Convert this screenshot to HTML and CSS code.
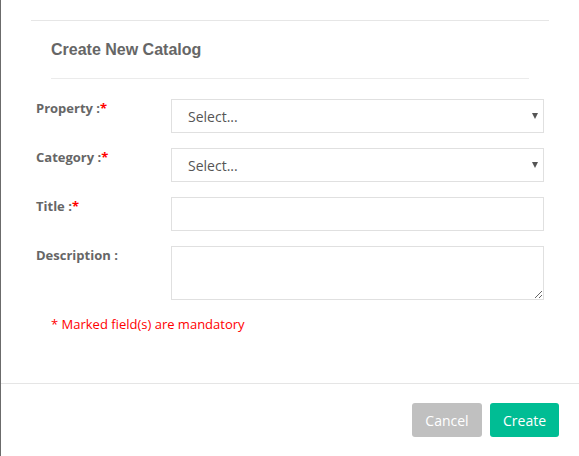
FILE: index.html
```html
<!DOCTYPE html>
<html>
<head>
<meta charset="utf-8">
<link rel="stylesheet" href="styles.css">
</head>
<body>
<div class="modal">
  <div class="top-rule"></div>
  <div class="header">
    <h2 class="title">Create New Catalog</h2>
  </div>
  <form class="form">
    <div class="row">
      <label class="label">Property :<span class="req">*</span></label>
      <div class="select-wrap">
        <select class="control select"><option>Select...</option></select>
        <span class="arrow"></span>
      </div>
    </div>
    <div class="row">
      <label class="label">Category :<span class="req">*</span></label>
      <div class="select-wrap">
        <select class="control select"><option>Select...</option></select>
        <span class="arrow"></span>
      </div>
    </div>
    <div class="row">
      <label class="label">Title :<span class="req">*</span></label>
      <input class="control input" type="text">
    </div>
    <div class="row">
      <label class="label">Description :</label>
      <textarea class="control textarea"></textarea>
    </div>
    <p class="note">* Marked field(s) are mandatory</p>
  </form>
  <div class="footer">
    <button class="btn btn-cancel" type="button">Cancel</button>
    <button class="btn btn-create" type="button">Create</button>
  </div>
</div>
</body>
</html>
```
FILE: styles.css
```css
html, body {
  margin: 0;
  padding: 0;
  background: #ffffff;
}
.modal {
  width: 578px;
  height: 456px;
  border-left: 1px solid #6b6b6b;
  display: flex;
  flex-direction: column;
  font-family: "Open Sans", sans-serif;
}
.top-rule {
  margin: 20px 30px 0 30px;
  border-top: 1px solid #e6e6e6;
}
.header {
  margin: 0 50px;
  border-bottom: 1px solid #ebebeb;
  padding: 19px 0 18px 0;
}
.title {
  margin: 0;
  font-family: "Liberation Sans", Arial, sans-serif;
  font-weight: bold;
  font-size: 16px;
  line-height: 20px;
  color: #666666;
}
.form {
  padding: 20px 35px 0 35px;
  margin: 0;
}
.row {
  display: flex;
  align-items: flex-start;
  margin-bottom: 15px;
}
.label {
  width: 135px;
  flex: none;
  font-size: 13px;
  font-weight: bold;
  color: #666666;
  line-height: 16px;
  padding-top: 1px;
}
.req {
  color: #ff0000;
  font-size: 13px;
}
.select-wrap {
  position: relative;
  flex: 1;
  display: flex;
}
.control {
  box-sizing: border-box;
  flex: 1;
  height: 34px;
  border: 1px solid #e0e0e0;
  border-radius: 0;
  background: #ffffff;
  font-family: "Open Sans", sans-serif;
  font-size: 14px;
  color: #555555;
  margin: 0;
  outline: none;
}
.select {
  appearance: none;
  -webkit-appearance: none;
  padding: 0 0 0 16px;
}
.arrow {
  position: absolute;
  right: 6px;
  top: 14px;
  width: 0;
  height: 0;
  border-left: 3px solid transparent;
  border-right: 3px solid transparent;
  border-top: 6px solid #555555;
}
.textarea {
  height: 54px;
  resize: vertical;
  padding: 6px 12px;
}
.note {
  margin: 15px 0 0 15px;
  font-size: 13px;
  color: #ff0000;
  line-height: 18px;
}
.footer {
  margin-top: auto;
  border-top: 1px solid #e5e5e5;
  height: 73px;
  box-sizing: border-box;
  padding: 19px 20px 0 0;
  display: flex;
  justify-content: flex-end;
  gap: 8px;
  margin-bottom: 0;
}
.btn {
  height: 34px;
  border: none;
  border-radius: 3px;
  color: #ffffff;
  font-family: "Open Sans", sans-serif;
  font-size: 14px;
  padding: 0 13px;
  cursor: pointer;
}
.btn-cancel {
  background: #c0c0c0;
  width: 70px;
}
.btn-create {
  background: #00bd94;
  width: 69px;
}
```
